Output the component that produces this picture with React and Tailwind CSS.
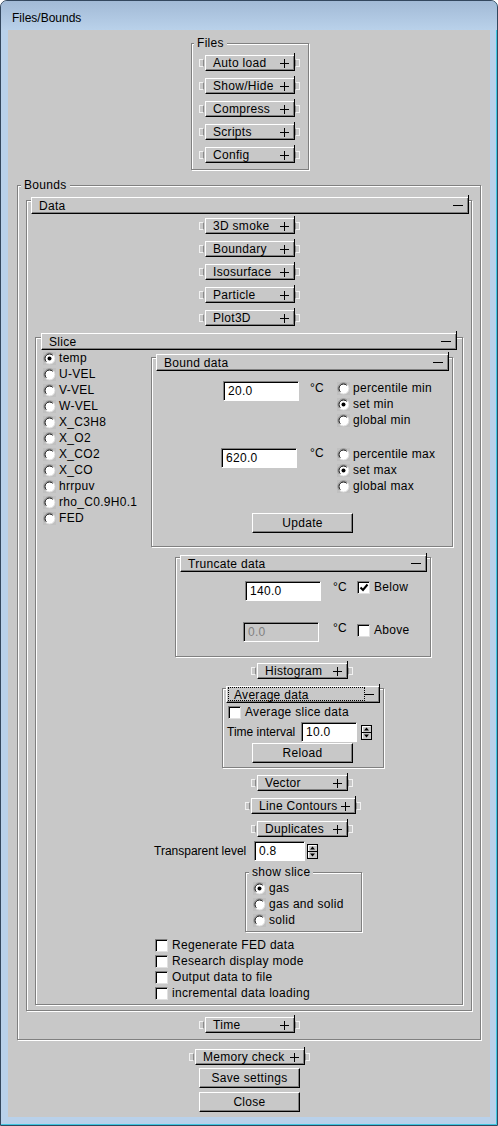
import React from 'react';

const raised =
  'border border-t-white border-l-white border-r-black border-b-black shadow-[inset_-1px_-1px_0_#808080] bg-[#c8c8c8]';

const sliceVars = ['temp', 'U-VEL', 'V-VEL', 'W-VEL', 'X_C3H8', 'X_O2', 'X_CO2', 'X_CO', 'hrrpuv', 'rho_C0.9H0.1', 'FED'];

function Etched({ label, labelLeft = 'left-[3px]', className = '', children }) {
  return (
    <div className={`relative flex flex-col items-start border border-[#808080] shadow-[inset_1px_1px_0_#fff,1px_1px_0_#fff] ${className}`}>
      {label && (
        <span className={`absolute top-[-8px] ${labelLeft} px-[3px] bg-[#c8c8c8] leading-[14px] whitespace-nowrap`}>{label}</span>
      )}
      {children}
    </div>
  );
}

function Header({ label, className = '', focus }) {
  return (
    <div className={`absolute z-10 h-[17px] flex items-center pl-[7px] ${raised} ${className}`}>
      {focus && <span className="absolute left-[1px] top-0 bottom-[1px] right-[14px] border border-dotted border-black" />}
      <span className="relative leading-[14px]">{label}</span>
      <span className="absolute right-[5px] top-[7px] w-[10px] h-[1px] bg-black" />
      <span className="absolute right-[-1px] top-[-3px] w-[1px] h-[3px] bg-black" />
    </div>
  );
}

function Conn({ side }) {
  return (
    <span
      className={`w-[5px] h-[8px] shrink-0 border border-[#f2f2f2] ${side === 'l' ? 'border-r-[#8a8a8a]' : 'border-l-[#8a8a8a]'}`}
    />
  );
}

function RollBtn({ label, w = 'w-[90px]', className = '' }) {
  return (
    <div className={`flex items-center h-[16px] ${className}`}>
      <Conn side="l" />
      <div className={`relative ml-[1px] h-[16px] ${w} flex items-center pl-[7px] ${raised}`}>
        <span className="leading-[14px] whitespace-nowrap">{label}</span>
        <svg className="absolute right-[5px] top-[3px]" width="9" height="9" viewBox="0 0 9 9">
          <path d="M0 4.5H9M4.5 0V9" stroke="#000" />
        </svg>
        <span className="absolute right-[-1px] top-[-3px] w-[1px] h-[3px] bg-black" />
      </div>
      <Conn side="r" />
    </div>
  );
}

function Radio({ on }) {
  return (
    <svg width="13" height="13" viewBox="0 0 13 13" className="shrink-0">
      <rect width="13" height="13" fill="#c0c0c0" />
      <circle cx="6.5" cy="6.5" r="5.5" fill="#fff" />
      <path d="M2.6 10.4A5.5 5.5 0 0 1 10.4 2.6" fill="none" stroke="#808080" />
      <path d="M3.3 9.7A4.5 4.5 0 0 1 9.7 3.3" fill="none" stroke="#000" />
      <path d="M10.4 2.6A5.5 5.5 0 0 1 2.6 10.4" fill="none" stroke="#dcdcdc" />
      {on && <circle cx="6.5" cy="6.5" r="2" fill="#000" />}
    </svg>
  );
}

function RadioRow({ label, on }) {
  return (
    <div className="flex items-center gap-[3px] h-[16px] whitespace-nowrap">
      <Radio on={on} />
      <span className="leading-[14px]">{label}</span>
    </div>
  );
}

function Check({ on }) {
  return (
    <span className="relative w-[13px] h-[13px] shrink-0 bg-white border border-t-[#808080] border-l-[#808080] border-r-[#e0e0e0] border-b-[#e0e0e0] shadow-[inset_1px_1px_0_#000]">
      {on && (
        <svg className="absolute left-[1px] top-[1px]" width="10" height="10" viewBox="0 0 10 10">
          <path d="M1.5 4.5L4 7L8.5 1.5" fill="none" stroke="#000" strokeWidth="2" />
        </svg>
      )}
    </span>
  );
}

function CheckRow({ label, on, className = '' }) {
  return (
    <div className={`flex items-center gap-[4px] h-[16px] whitespace-nowrap ${className}`}>
      <Check on={on} />
      <span className="leading-[14px]">{label}</span>
    </div>
  );
}

function Field({ value, className = '', disabled }) {
  return (
    <div
      className={`flex items-center pl-[4px] h-[20px] shrink-0 border border-t-[#808080] border-l-[#808080] border-r-white border-b-white shadow-[inset_1px_1px_0_#000] ${disabled ? 'bg-[#c8c8c8] text-[#808080]' : 'bg-white'} ${className}`}
    >
      {value}
    </div>
  );
}

function Spin({ className = '' }) {
  return (
    <svg width="11" height="15" viewBox="0 0 11 15" className={`shrink-0 ${className}`}>
      <rect x="0.5" y="0.5" width="10" height="14" fill="#c8c8c8" stroke="#000" />
      <path d="M1.5 1.5H9.5M1.5 1.5V13.5" stroke="#fff" />
      <path d="M1 7.5H10" stroke="#000" />
      <path d="M5.5 2.5L8 5.5H3Z" fill="#000" />
      <path d="M5.5 12.5L8 9.5H3Z" fill="#000" />
    </svg>
  );
}

function Btn({ label, className = '' }) {
  return (
    <div className={`flex items-center justify-center h-[20px] w-[101px] shrink-0 ${raised} ${className}`}>{label}</div>
  );
}

export default function App() {
  return (
    <div className="w-[498px] h-[1126px] flex flex-col rounded-t-[7px] border border-[#33475e] bg-[#b9d1ea] shadow-[inset_-1px_-1px_0_#3fc6e0] font-['Liberation_Sans',Arial,sans-serif] text-[12px] text-black overflow-hidden">
      <div className="h-[29px] pt-[10px] pl-[11px] leading-[14px] bg-gradient-to-b from-[#a2bad6] to-[#b9d1ea] rounded-t-[6px]">
        Files/Bounds
      </div>

      <div className="mx-[7px] h-[1087px] bg-[#c8c8c8] flex flex-col items-start tracking-[0.3px]">
        {/* Files */}
        <Etched label="Files" labelLeft="left-[2px]" className="ml-[183px] mt-[13px] w-[118px] h-[127px]">
          <div className="flex flex-col gap-[7px] pt-[11px] pl-[7px]">
            <RollBtn label="Auto load" />
            <RollBtn label="Show/Hide" />
            <RollBtn label="Compress" />
            <RollBtn label="Scripts" />
            <RollBtn label="Config" />
          </div>
        </Etched>

        {/* Bounds */}
        <Etched label="Bounds" className="ml-[9px] mt-[15px] w-[464px] h-[855px]">
          <Etched className="ml-[8px] mt-[14px] w-[446px] h-[811px]">
            <Header label="Data" className="left-[4px] right-[2px] top-[-4px]" />
            <div className="flex flex-col gap-[7px] mt-[17px] ml-[172px]">
              <RollBtn label="3D smoke" />
              <RollBtn label="Boundary" />
              <RollBtn label="Isosurface" />
              <RollBtn label="Particle" />
              <RollBtn label="Plot3D" />
            </div>

            {/* Slice */}
            <Etched className="ml-[8px] mt-[11px] w-[428px] h-[668px]">
              <Header label="Slice" className="left-[5px] right-[5px] top-[-5px]" />
              <div className="flex items-start">
                <div className="ml-[7px] mt-[12px] w-[108px] flex flex-col">
                  {sliceVars.map((v, i) => (
                    <RadioRow key={v} label={v} on={i === 0} />
                  ))}
                </div>

                <div className="mt-[19px] w-[302px] flex flex-col items-start">
                  {/* Bound data */}
                  <Etched className="w-[302px] h-[190px]">
                    <Header label="Bound data" className="left-[4px] right-[3px] top-[-4px]" />
                    <div className="flex items-start mt-[22px] ml-[71px]">
                      <Field value="20.0" className="mt-[1px] w-[76px]" />
                      <span className="ml-[11px] w-[27px] leading-[16px]">°C</span>
                      <div className="flex flex-col">
                        <RadioRow label="percentile min" />
                        <RadioRow label="set min" on />
                        <RadioRow label="global min" />
                      </div>
                    </div>
                    <div className="flex items-start mt-[18px] ml-[69px]">
                      <Field value="620.0" className="mt-[2px] w-[76px]" />
                      <span className="ml-[13px] w-[27px] leading-[14px]">°C</span>
                      <div className="flex flex-col">
                        <RadioRow label="percentile max" />
                        <RadioRow label="set max" on />
                        <RadioRow label="global max" />
                      </div>
                    </div>
                    <Btn label="Update" className="mt-[19px] ml-[100px]" />
                  </Etched>

                  {/* Truncate data */}
                  <Etched className="ml-[24px] mt-[10px] w-[256px] h-[100px]">
                    <Header label="Truncate data" className="left-[4px] right-[3px] top-[-3px]" />
                    <div className="flex items-start mt-[21px] ml-[69px]">
                      <Field value="140.0" className="mt-[2px] w-[76px]" />
                      <span className="ml-[12px] w-[24px] leading-[16px]">°C</span>
                      <CheckRow label="Below" on />
                    </div>
                    <div className="flex items-start mt-[19px] ml-[67px]">
                      <Field value="0.0" disabled className="mt-[2px] w-[76px]" />
                      <span className="ml-[14px] w-[24px] leading-[16px]">°C</span>
                      <CheckRow label="Above" className="mt-[2px]" />
                    </div>
                  </Etched>

                  <RollBtn label="Histogram" w="w-[91px]" className="ml-[100px] mt-[6px]" />

                  {/* Average data */}
                  <Etched className="ml-[71px] mt-[9px] w-[162px] h-[80px]">
                    <Header label="Average data" focus className="left-[3px] right-[3px] top-[-3px]" />
                    <CheckRow label="Average slice data" className="mt-[15px] ml-[5px]" />
                    <div className="flex items-start mt-[2px] ml-[4px]">
                      <span className="w-[74px] leading-[20px] whitespace-nowrap tracking-normal">Time interval</span>
                      <Field value="10.0" className="w-[56px]" />
                      <Spin className="ml-[4px] mt-[3px]" />
                    </div>
                    <Btn label="Reload" className="mt-[1px] ml-[29px]" />
                  </Etched>

                  <RollBtn label="Vector" w="w-[91px]" className="ml-[100px] mt-[7px]" />
                  <RollBtn label="Line Contours" w="w-[105px]" className="ml-[94px] mt-[7px]" />
                  <RollBtn label="Duplicates" w="w-[91px]" className="ml-[100px] mt-[7px]" />

                  <div className="flex items-start mt-[4px] ml-[3px]">
                    <span className="w-[100px] leading-[20px] whitespace-nowrap tracking-normal">Transparent level</span>
                    <Field value="0.8" className="w-[51px]" />
                    <Spin className="ml-[2px] mt-[3px]" />
                  </div>

                  <Etched label="show slice" className="ml-[94px] mt-[11px] w-[117px] h-[60px]">
                    <div className="flex flex-col mt-[7px] ml-[7px]">
                      <RadioRow label="gas" on />
                      <RadioRow label="gas and solid" />
                      <RadioRow label="solid" />
                    </div>
                  </Etched>

                  <div className="flex flex-col mt-[5px] ml-[4px]">
                    <CheckRow label="Regenerate FED data" />
                    <CheckRow label="Research display mode" />
                    <CheckRow label="Output data to file" />
                    <CheckRow label="incremental data loading" />
                  </div>
                </div>
              </div>
            </Etched>
          </Etched>

          <RollBtn label="Time" className="ml-[181px] mt-[6px]" />
        </Etched>

        <RollBtn label="Memory check" w="w-[110px]" className="ml-[181px] mt-[9px]" />
        <Btn label="Save settings" className="ml-[191px] mt-[3px]" />
        <Btn label="Close" className="ml-[191px] mt-[4px]" />
      </div>
    </div>
  );
}
